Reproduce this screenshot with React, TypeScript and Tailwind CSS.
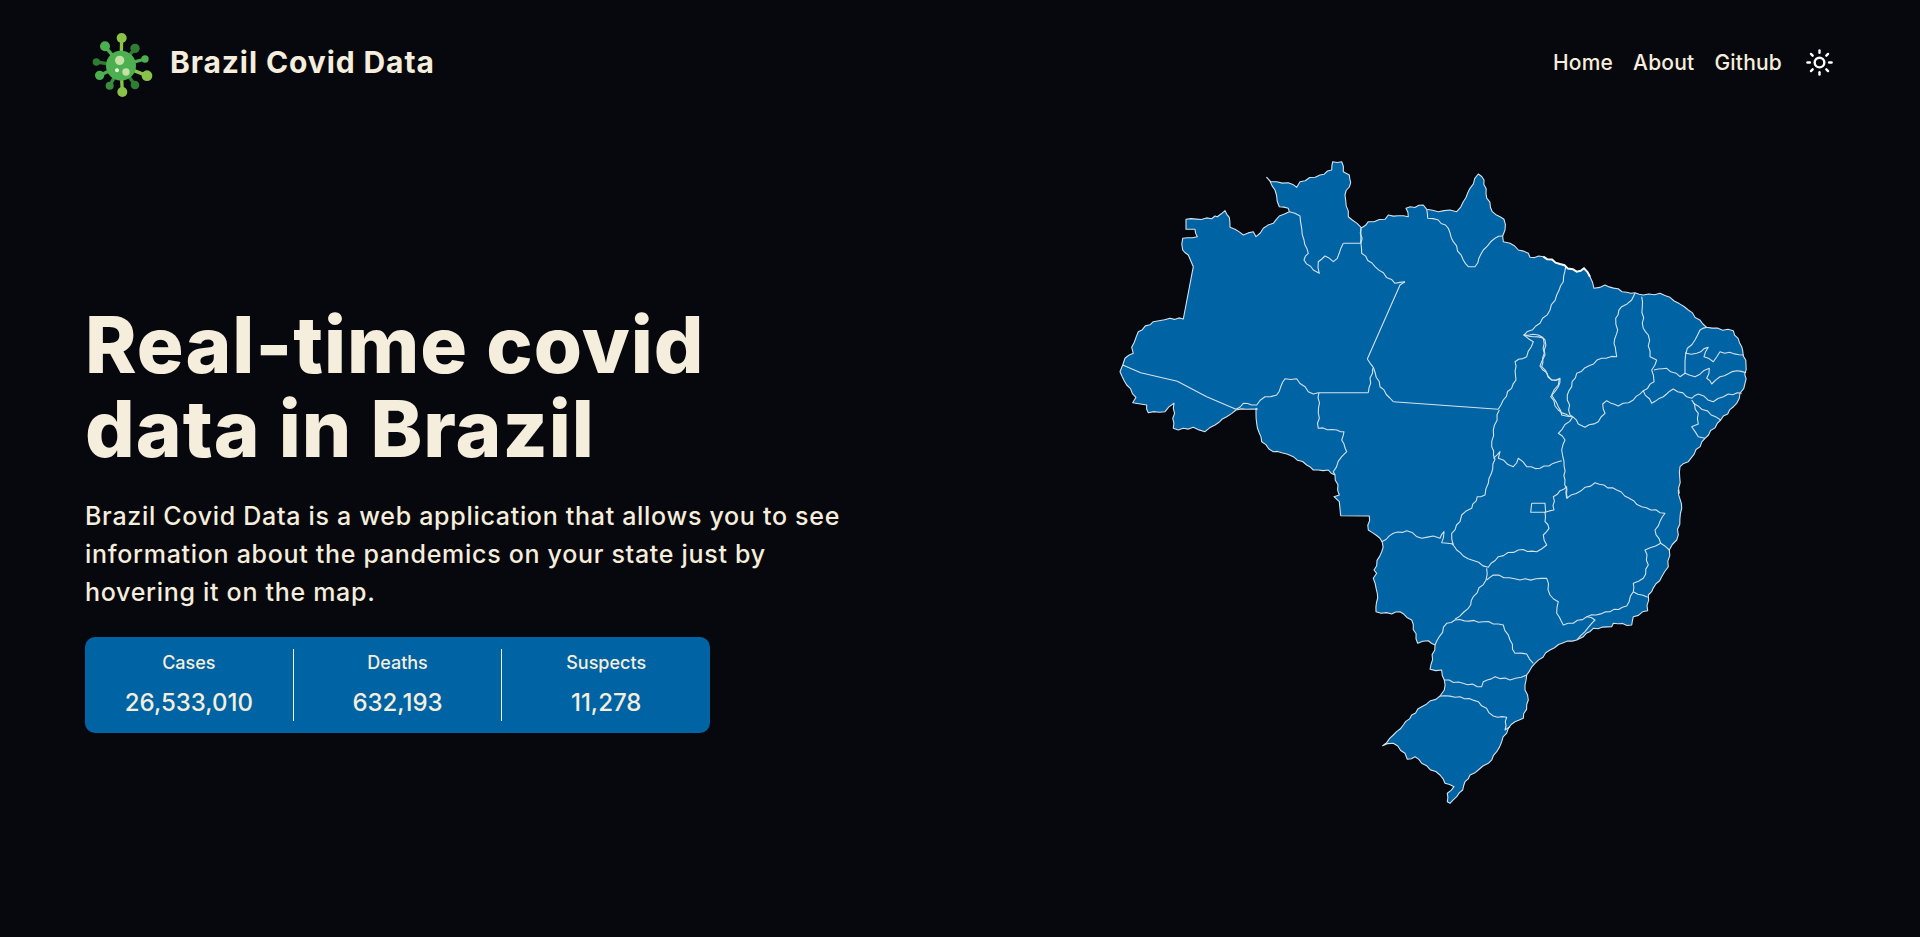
import { Sun } from "lucide-react";

// map points were read off crops of the picture, each crop has its own origin (scale 3)
type Crop = [number, number];
const A: Crop = [1100, 140];
const B: Crop = [1450, 240];
const C: Crop = [1350, 480];
const D: Crop = [1240, 370];
const E: Crop = [1360, 160];

const toXY = (crop: Crop, s: string) =>
  s
    .trim()
    .split(/\s+/)
    .map((p) => {
      const [x, y] = p.split(",").map(Number);
      return [crop[0] + x / 3, crop[1] + y / 3];
    });

const join = (list: number[][]) => list.map(([x, y]) => `${x.toFixed(1)},${y.toFixed(1)}`).join(" ");

const pts = (crop: Crop, s: string) => join(toXY(crop, s));

// state borders are not straight in the picture: split long segments and shake them a little
const rough = (crop: Crop, s: string) => {
  const list = toXY(crop, s);
  const out: number[][] = [];
  list.forEach(([x, y], i) => {
    if (i === 0) {
      out.push([x, y]);
      return;
    }
    const [px, py] = list[i - 1];
    const len = Math.hypot(x - px, y - py);
    const steps = Math.max(1, Math.round(len / 5));
    for (let k = 1; k <= steps; k++) {
      const t = k / steps;
      const n = k === steps ? 0 : Math.sin((px + k) * 12.9 + (py - k) * 78.2) * 0.9;
      out.push([px + (x - px) * t + (n * (y - py)) / len, py + (y - py) * t - (n * (x - px)) / len]);
    }
  });
  return join(out);
};

const outline = [
  rough(A, "258,238 335,236 345,228 352,230 375,212 388,232 390,262 405,268 430,285 460,275 468,290 490,265 520,250 538,228 568,215 565,205 538,200 525,150 500,112 512,125 530,125 565,128 590,142 600,125 660,105 695,90 698,65 725,65 730,95 748,105 752,128 735,165 745,230 783,262"),
  rough(E, "5,203 25,185 75,178 85,165 145,170 138,145 190,135 200,148 235,155 270,150 290,155 310,125 330,85 355,42 372,60 378,100 397,155 432,178 435,210 428,228 430,245 450,250 475,270 505,280 510,292 550,290 600,312 650,335 672,325 690,350 702,385 735,375 800,397 825,398 850,405 900,400"),
  rough(B, "630,160 660,172 715,210 770,262 850,272 875,320 888,375 885,430 860,490 812,540 765,595 715,665 690,680 688,760"),
  rough(C, "985,30 995,85 980,180 958,210 955,260 935,290 895,345 893,392 850,410 845,435 790,430 785,440 730,445 700,470 680,480 640,488 600,510 555,550 530,585 525,630 535,660 520,715 495,725 475,745 455,785 440,815 415,850 385,870 360,885 345,905 338,930 320,950 300,970 292,965 292,940 312,920 285,910 270,885 215,850 195,830 172,838 165,820 130,790 98,797 130,765 160,735 185,705 215,680 270,648 283,630 283,600 275,570 240,568 255,495 235,482 203,490 185,420 150,395 125,402 78,395 82,340 70,295 80,280 72,270 100,200"),
  rough(D, "429,530 420,505 385,480 388,438"),
  pts(D, "302,437"),
  rough(D, "298,395 282,380 298,375 285,315 265,300 220,300 200,285 160,260 125,248 100,245 65,215 50,160 48,115"),
  rough(A, "472,808 440,808 408,810 380,830 345,855 315,875 280,862 235,870 220,865 222,790 195,815 145,818 140,795"),
  pts(A, "98,788"),
  rough(A, "108,772 80,735 60,695 68,675 75,655 100,640 95,622 115,575 160,545 210,535 250,537"),
  pts(A, "280,380"),
  rough(A, "265,345 248,330 248,295 292,290 285,268"),
  pts(A, "258,268"),
].join(" ");

const borders = [
  pts(A, "68,675 122,698 232,724 320,770 408,808"),
  rough(A, "408,808 430,790 455,795 470,795 495,770 530,765 555,716 590,716 625,755 640,762 655,758"),
  pts(A, "655,758 805,758"),
  rough(A, "805,758 818,685"),
  rough(D, "237,68 235,175 290,180 312,185 305,210 320,245 305,260 280,305 285,315"),
  rough(A, "568,215 600,228 605,265 612,300 625,340 612,360 640,390 658,400 655,365 675,348 700,365 712,355 730,310"),
  pts(A, "730,310 782,310 783,262"),
  rough(E, "3,205 5,280 45,320 105,370 135,365"),
  pts(E, "135,365 120,375 25,590 22,597"),
  rough(E, "22,597 40,622 60,680 100,725"),
  pts(E, "100,725 415,748"),
  rough(E, "200,148 203,175 235,180 265,205 280,245 310,300 325,320 345,320 370,270 405,235 428,228"),
  rough(E, "617,320 610,365 590,405 570,450 540,490 492,525 550,535 553,580 545,620 575,660 600,655 595,680 572,710 595,750 630,770"),
  rough(E, "492,525 520,545 500,590 465,605 468,660 430,720 415,748"),
  rough(D, "778,120 760,180 755,230 765,268 745,340 735,375 712,380 695,415 665,435 660,455 635,490 640,525"),
  rough(D, "425,515 460,490 500,482 545,505 580,498 600,505 612,485 605,518 640,522"),
  rough(B, "130,655 150,635 145,655 190,680 205,655 230,680 270,685 335,662"),
  rough(B, "220,285 265,285 285,300 285,345 270,378 305,420 328,418 325,435 305,465 325,500 335,525 368,530"),
  rough(B, "555,160 545,180 515,200 497,235 503,270 492,310 500,350 455,355 380,400 352,465 360,525 368,530"),
  rough(B, "368,530 325,580 345,600 335,630 342,665 345,720 352,775"),
  rough(B, "368,530 385,552 405,562 445,545 465,520 458,492 470,482 505,498 550,480 580,452 612,425 605,390 620,360"),
  rough(B, "575,170 580,265 595,285 600,350 620,360"),
  rough(B, "612,390 650,385 690,410 705,400 735,410 778,385 770,415 785,432 810,410 860,392 888,398"),
  rough(B, "772,262 750,270 735,300 712,325 708,340 740,340 775,322 762,350 790,365 810,335 882,345"),
  rough(B, "708,335 705,380 705,400"),
  rough(B, "580,452 605,490 640,470 670,447 725,475 745,462 790,485 835,462 875,460"),
  rough(B, "730,490 812,540"),
  rough(B, "725,480 745,520 745,552 725,560 745,590 765,595"),
  rough(C, "650,55 735,8 800,30 875,80 945,100 915,150 932,190 958,210"),
  rough(C, "932,190 885,210 895,255 880,295 850,310 850,335 830,378 780,395 710,410 670,430 640,435 620,400 625,365 600,345 590,295 510,300 430,285 410,300"),
  rough(C, "850,335 893,352"),
  pts(C, "545,70 585,70 587,97 542,97 545,70"),
  rough(C, "650,55 650,20 630,32 610,50 612,90 585,97 585,125 597,145 580,165 590,195 560,215 505,210 445,230 415,262 340,228 320,210 305,190"),
  rough(C, "410,265 408,300 370,350 355,385 315,418"),
  rough(C, "255,495 290,430 315,420 400,425 460,435 480,480 495,520 530,522 550,550"),
  rough(C, "283,600 395,620 400,605 435,590 480,600 530,585"),
  rough(C, "270,648 330,650 385,665 430,708 470,712 465,750 480,740"),
  rough(C, "680,480 705,455 735,420 710,410"),
];

function BrazilMap() {
  return (
    <svg width="650" height="670" viewBox="1110 150 650 670" className="shrink-0">
      <polygon points={outline} fill="#0063a3" stroke="#d5e2ec" strokeWidth="1.1" strokeLinejoin="round" />
      {borders.map((b, i) => (
        <polyline key={i} points={b} fill="none" stroke="#d5e2ec" strokeWidth="1.1" strokeLinejoin="round" />
      ))}
      <polyline points={rough(E, "550,290 600,312 650,335 672,325 690,350")} fill="none" stroke="#f3f6f8" strokeWidth="2" />
    </svg>
  );
}

const arms: [number, number, number, string][] = [
  [110, 45, 15, "#8bc34a"],
  [60, 70, 15, "#4caf50"],
  [150, 76, 14, "#2e7d32"],
  [180, 108, 11, "#4caf50"],
  [186, 158, 16, "#8bc34a"],
  [150, 186, 13, "#2e7d32"],
  [112, 207, 15, "#8bc34a"],
  [74, 188, 12, "#388e3c"],
  [44, 157, 14, "#4caf50"],
  [34, 117, 11, "#2e7d32"],
];

function VirusLogo() {
  return (
    <svg width="80" height="80" viewBox="0 0 240 240" className="shrink-0">
      {arms.map(([x, y, r, color]) => (
        <g key={`${x}-${y}`}>
          <line x1="108" y1="128" x2={x} y2={y} stroke={color} strokeWidth="10" />
          <circle cx={x} cy={y} r={r} fill={color} />
        </g>
      ))}
      <circle cx="108" cy="128" r="45" fill="#4caf50" />
      <circle cx="104" cy="112" r="14" fill="#c5e1a5" />
      <circle cx="123" cy="147" r="11" fill="#c5e1a5" />
      <circle cx="96" cy="142" r="6" fill="#f1f8e9" />
    </svg>
  );
}

const stats = [
  { label: "Cases", value: "26,533,010" },
  { label: "Deaths", value: "632,193" },
  { label: "Suspects", value: "11,278" },
];

export default function App() {
  return (
    <div className="h-[937px] overflow-hidden bg-[#07080e] text-[#f5eedc] font-['Inter',sans-serif]">
      <nav className="flex items-center justify-between h-[125px] pl-[85px] pr-[86px]">
        <div className="flex items-center gap-[5px]">
          <VirusLogo />
          <span className="text-[30px] font-bold tracking-[0.9px]">Brazil Covid Data</span>
        </div>
        <div className="flex items-center">
          <a className="text-[21px] font-medium tracking-[0.2px]">Home</a>
          <a className="text-[21px] font-medium tracking-[0.2px] ml-5">About</a>
          <a className="text-[21px] font-medium tracking-[0.2px] ml-5">Github</a>
          <Sun className="w-[29px] h-[29px] ml-[23px] text-white" strokeWidth={2} />
        </div>
      </nav>

      <main className="flex mt-[25px] pl-[85px]">
        <section className="w-[1025px] shrink-0 pt-[153px]">
          <h1 className="text-[78px] leading-[84px] font-extrabold tracking-[1px]">
            Real-time covid
            <br />
            data in Brazil
          </h1>
          <p className="mt-[26px] text-[25px] leading-[38px] font-medium tracking-[0.7px]">
            Brazil Covid Data is a web application that allows you to see
            <br />
            information about the pandemics on your state just by
            <br />
            hovering it on the map.
          </p>
          <div className="mt-[26px] flex w-[625px] h-[96px] items-center rounded-[10px] bg-[#0063a3] py-3">
            {stats.map((s, i) => (
              <div
                key={s.label}
                className={
                  i === 0
                    ? "flex-1 h-full flex flex-col items-center justify-between"
                    : "flex-1 h-full flex flex-col items-center justify-between border-l border-[#f5eedc]"
                }
              >
                <span className="text-[18px] font-medium">{s.label}</span>
                <span className="text-[24px] font-medium">{s.value}</span>
              </div>
            ))}
          </div>
        </section>
        <BrazilMap />
      </main>
    </div>
  );
}
